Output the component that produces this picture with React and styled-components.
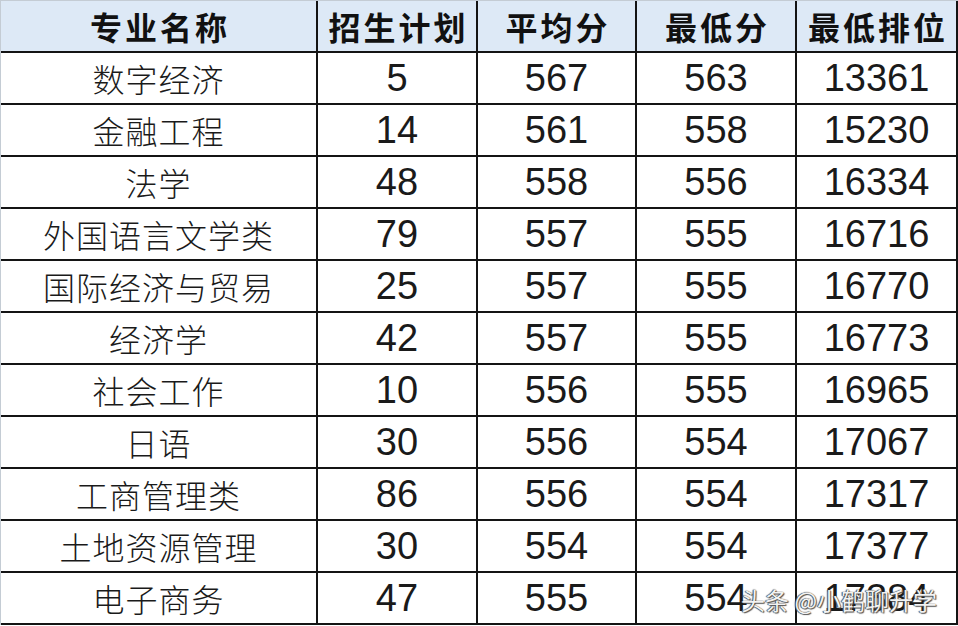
import React from 'react';
import styled, { createGlobalStyle } from 'styled-components';

const GlobalStyle = createGlobalStyle`
  html, body {
    margin: 0;
    padding: 0;
    background: #ffffff;
  }
`;

const rows = [
  ['数字经济', '5', '567', '563', '13361'],
  ['金融工程', '14', '561', '558', '15230'],
  ['法学', '48', '558', '556', '16334'],
  ['外国语言文学类', '79', '557', '555', '16716'],
  ['国际经济与贸易', '25', '557', '555', '16770'],
  ['经济学', '42', '557', '555', '16773'],
  ['社会工作', '10', '556', '555', '16965'],
  ['日语', '30', '556', '554', '17067'],
  ['工商管理类', '86', '556', '554', '17317'],
  ['土地资源管理', '30', '554', '554', '17377'],
  ['电子商务', '47', '555', '554', '17384'],
];

const headers = ['专业名称', '招生计划', '平均分', '最低分', '最低排位'];

const Page = styled.div`
  position: relative;
  width: 958px;
  height: 626px;
  overflow: hidden;
`;

const Sheet = styled.div`
  display: grid;
  grid-template-columns: 315px 158px 157px 158px 159px;
  grid-auto-rows: 50px;
  gap: 2px;
  width: 958px;
  box-sizing: border-box;
  background: #141414;
  border-top: 1px solid #c4ccd4;
  border-left: 1px solid #c4ccd4;
  padding: 0 2px 2px 0;
`;

const HeadCell = styled.div`
  display: flex;
  align-items: center;
  justify-content: center;
  background: #dde9f6;
  color: #111;
  font-family: "Noto Sans CJK SC", "Noto Sans", sans-serif;
  font-weight: 700;
  font-size: 32px;
  letter-spacing: 3px;
  padding-left: 3px;
`;

const Cell = styled.div`
  display: flex;
  align-items: center;
  justify-content: center;
  background: #ffffff;
  color: #1a1a1a;
  font-family: ${p => p.$num
    ? '"Liberation Sans", Arial, sans-serif'
    : '"Noto Sans CJK SC", "Noto Sans", sans-serif'};
  font-size: ${p => (p.$num ? '38px' : '32px')};
  font-weight: ${p => (p.$num ? 400 : 300)};
  letter-spacing: ${p => (p.$num ? '0' : '1px')};
`;

const Watermark = styled.div`
  position: absolute;
  left: 741px;
  top: 582px;
  font-family: "Noto Sans CJK SC", "Noto Sans", sans-serif;
  font-size: 24px;
  color: rgba(255, 255, 255, 0.94);
  text-shadow: 0 0 1px #333, 1px 1px 1px #555, -1px 0 1px #555;
  white-space: nowrap;
`;

export default function App() {
  return (
    <Page>
      <GlobalStyle />
      <Sheet>
        {headers.map(h => (
          <HeadCell key={h}>{h}</HeadCell>
        ))}
        {rows.map(r =>
          r.map((v, i) => (
            <Cell key={r[0] + i} $num={i > 0}>
              {v}
            </Cell>
          ))
        )}
      </Sheet>
      <Watermark>头条 @小鹤聊升学</Watermark>
    </Page>
  );
}
